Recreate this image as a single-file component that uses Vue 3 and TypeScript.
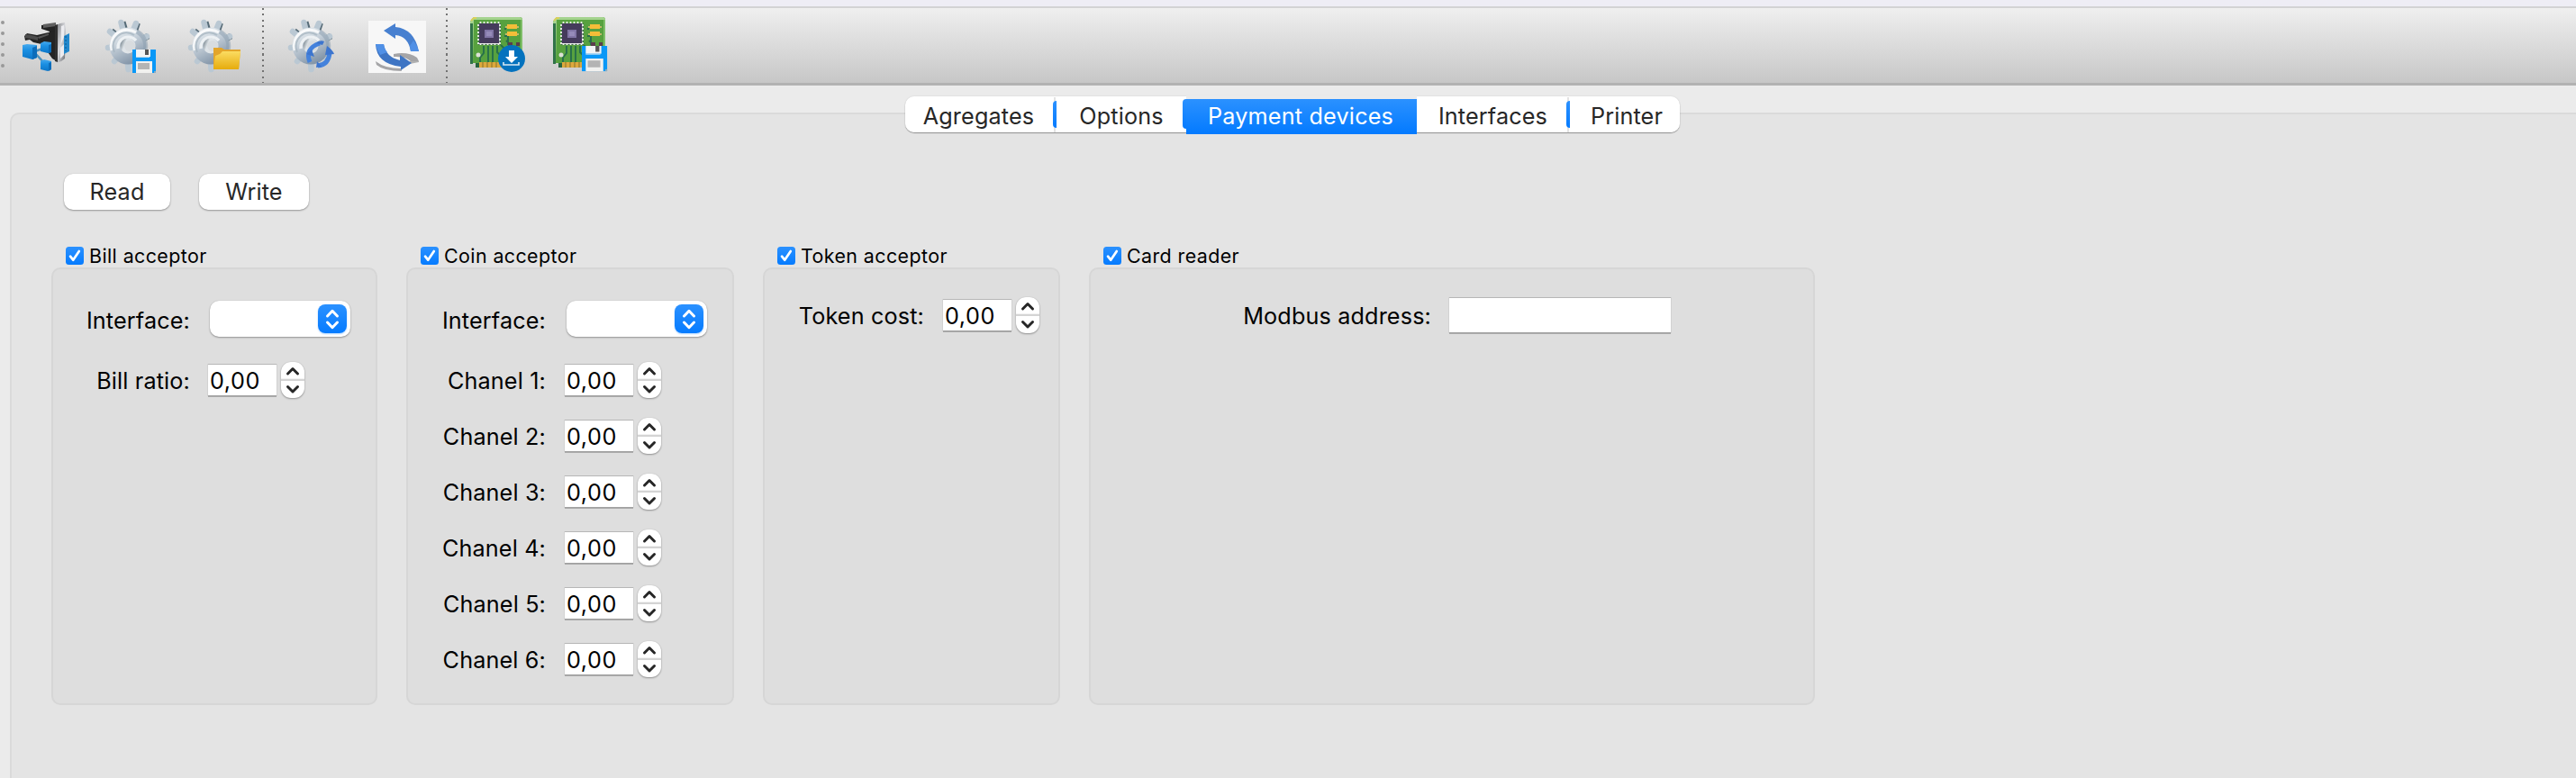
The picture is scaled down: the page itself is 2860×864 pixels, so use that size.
<script setup lang="ts">
import { ref } from 'vue'

interface Field { label: string; kind: 'combo' | 'spin' | 'text' }
interface Group { id: string; title: string; fields: Field[] }
type Tool = 'acceptor' | 'gear-save' | 'gear-open' | 'gear-sync' | 'refresh' | 'board-load' | 'board-save'

const sections: Tool[][] = [
  ['acceptor', 'gear-save', 'gear-open'],
  ['gear-sync', 'refresh'],
  ['board-load', 'board-save'],
]
const tabs = ['Agregates', 'Options', 'Payment devices', 'Interfaces', 'Printer']
const active = ref(2)

const groups: Group[] = [
  { id: 'bill', title: 'Bill acceptor', fields: [{ label: 'Interface:', kind: 'combo' }, { label: 'Bill ratio:', kind: 'spin' }] },
  {
    id: 'coin',
    title: 'Coin acceptor',
    fields: [
      { label: 'Interface:', kind: 'combo' },
      ...[1, 2, 3, 4, 5, 6].map((n): Field => ({ label: `Chanel ${n}:`, kind: 'spin' })),
    ],
  },
  { id: 'token', title: 'Token acceptor', fields: [{ label: 'Token cost:', kind: 'spin' }] },
  { id: 'card', title: 'Card reader', fields: [{ label: 'Modbus address:', kind: 'text' }] },
]
const teeth = [[20.5, 4], [37, 5], [49, 19.5], [8, 14], [6, 32], [13, 47], [28.5, 56], [45, 43]]
const pins = [14, 18, 22, 26, 30, 34]
</script>

<template>
  <div class="window">
    <svg class="defs" width="0" height="0">
      <defs>
        <linearGradient id="blue" x1="0" y1="0" x2="0" y2="1">
          <stop stop-color="#2b91ff" /><stop offset="1" stop-color="#057bff" />
        </linearGradient>
        <linearGradient id="steel" x1="0" y1="0" x2="0.5" y2="1">
          <stop offset="0" stop-color="#f1f5f7" /><stop offset="0.45" stop-color="#c9d3dc" /><stop offset="1" stop-color="#8496a9" />
        </linearGradient>
        <linearGradient id="hub" x1="0" y1="0" x2="1" y2="0.4">
          <stop offset="0" stop-color="#56656f" /><stop offset="0.4" stop-color="#dfe5e9" /><stop offset="1" stop-color="#dfe3e6" />
        </linearGradient>
        <linearGradient id="folder" x1="0" y1="0" x2="0" y2="1">
          <stop offset="0" stop-color="#fbdc62" /><stop offset="1" stop-color="#e6ab0c" />
        </linearGradient>
        <linearGradient id="cube" x1="0" y1="0" x2="0" y2="1">
          <stop offset="0" stop-color="#45a9ee" /><stop offset="0.4" stop-color="#1b8fe2" /><stop offset="1" stop-color="#0c76c8" />
        </linearGradient>
        <linearGradient id="plate" x1="0" y1="0" x2="1" y2="1">
          <stop offset="0" stop-color="#74767a" /><stop offset="0.5" stop-color="#d9dade" /><stop offset="1" stop-color="#5f6165" />
        </linearGradient>
        <g id="gear">
          <line v-for="(t, i) in teeth.slice(0, 4)" :key="'d' + i" x1="30" y1="31" :x2="t[0] + 1.5" :y2="t[1] + 0.5" stroke="#556a76" stroke-width="7" />
          <line v-for="(t, i) in teeth" :key="'l' + i" x1="27" y1="31" :x2="t[0]" :y2="t[1] + 1" stroke="#bac8d3" stroke-width="6.5" stroke-linecap="round" />
          <circle cx="28" cy="31" r="20.5" fill="url(#steel)" />
          <path d="M10 36a18 18 0 0 1 27-20" fill="none" stroke="#fff" stroke-width="3" opacity=".8" />
          <path d="M38 15a18 18 0 0 1 9 21" fill="none" stroke="#8ea0b1" stroke-width="5" opacity=".55" />
          <path d="M13 38a15 15 0 0 1 22-19" fill="none" stroke="#a3b2be" stroke-width="2" opacity=".7" />
          <path d="M17 34a11.500 11.500 0 0 1 20-9" fill="none" stroke="#edf1f4" stroke-width="3.500" />
          <circle cx="28" cy="31" r="8.500" fill="url(#hub)" />
          <circle cx="30" cy="31" r="6" fill="#d8dcdf" />
        </g>
        <g id="floppy">
          <path d="M0 0h26v26H0z" fill="#0998f7" />
          <path d="M4 0h16v8H4z" fill="#f2f4f5" /><path d="M14 0h4v6h-4z" fill="#555" /><path d="M4 8h15v1H4z" fill="#b9d9ee" />
          <path d="M4 13h18v13H4z" fill="#f1f1ef" /><path d="M6 15h13v7H6z" fill="#b4b4b4" /><path d="M24 24h2v2h-2z" fill="#8babbf" />
        </g>
        <g id="board">
          <path d="M5-1h51q3 0 3 3v48H10v3H7v-3H1V4z" fill="#57a13f" />
          <path d="M1 4L5-1h51q3 0 3 3H5l-1 48H1z" fill="#a4d38e" />
          <path d="M1 6h3v45H1z" fill="#317349" /><path d="M7 50h4v5H7z" fill="#29643f" /><path d="M57 2h2v48h-2z" fill="#7fbd68" />
          <path d="M16 31v8l-4 5v5M21 31v19M26 31v19M31 31v7l4 4v7M35 30l7 7v12M39 20h4v10M39 12h2M41 25l14 14" fill="none" stroke="#28704a" stroke-width="2" />
          <path d="M2 3l3-3h3" fill="none" stroke="#d7d05a" stroke-width="2" />
          <path d="M11 49h26v6H11z" fill="#dda83d" /><path d="M15 49v6M20 49v6M25 49v6M30 49v6" stroke="#83722e" stroke-width="1" />
          <path d="M10 6h25v24H10z" fill="#3e6a4b" />
          <g stroke="#f1f3ef" stroke-width="1.8">
            <g v-for="p in pins" :key="p">
              <path :d="`M${p - 1.5} 4v26`" /><path :d="`M9 ${p - 6}h26`" />
            </g>
          </g>
          <path d="M11 6h22v22H11z" fill="#453b5c" /><path d="M17 13h10v9H17z" fill="#8175a5" /><path d="M19 15h6v5h-6z" fill="#968bb9" />
          <path d="M42 7h11v5H42zM42 15h11v5H42z" fill="#f4bd38" /><path d="M40 9h2v2h-2zM53 9h2v2h-2zM40 17h2v2h-2zM53 17h2v2h-2z" fill="#c5b66a" />
          <path d="M43 27h5v5h-5zM52 27h4v4h-4z" fill="#5a3e4c" /><circle cx="10" cy="41" r="2.5" fill="#dde1d7" />
        </g>
      </defs>
    </svg>

    <header class="toolbar">
      <div class="handle"><i v-for="n in 5" :key="n" /></div>
      <div v-for="(section, s) in sections" :key="s" class="section">
        <svg v-for="tool in section" :key="tool" class="tool" viewBox="0 -2 64 64">
          <template v-if="tool === 'acceptor'">
            <path d="M24 8l16-2v11l-7 2v-4l-9-3z" fill="#242424" /><path d="M26 7l14-2v4l-14 2z" fill="#606060" />
            <path d="M5 20l3-3 11 2 17-4 5-2v35l-5-3-7-10-5-6-9-2-4-3-5 1z" fill="#242424" />
            <path d="M6 18l7 1 7 2v4l-3-1-11-2z" fill="#4c4c4c" /><path d="M20 21l12-4v2l-11 4z" fill="#555" />
            <path d="M40 8l5-2 5-1 1 8-1 32-4 3-6 2z" fill="url(#plate)" /><path d="M39 8l3-1v42l-3-1z" fill="#303030" />
            <path d="M46 9l3-1v13l-3 7zM45 33l4-4v12l-4 4z" fill="#ececf0" />
            <path d="M49 20l6-3v20l-6 3z" fill="#2389cd" /><path d="M51 20v17" stroke="#0a568f" stroke-dasharray="2 2" />
            <path d="M17 37l8-3M17 39l11 12" stroke="#4a8fbb" stroke-width="2.5" />
            <path d="M3 30l5-1 11 1v14l-5 2-11-3z" fill="url(#cube)" /><path d="M14 33l5-2v13l-5 2z" fill="#0b6cba" />
            <path d="M23 28l4-2 8 1v11l-4 1-8-2z" fill="url(#cube)" /><path d="M32 30l3-1v9l-3 1z" fill="#0b6cba" />
            <path d="M23 48l4-2 8 2v9l-4 2-8-2z" fill="url(#cube)" /><path d="M32 50l3-1v8l-3 2z" fill="#0b6cba" />
          </template>
          <use v-if="tool.startsWith('gear')" href="#gear" />
          <use v-if="tool.startsWith('board')" href="#board" />
          <use v-if="tool === 'gear-save'" href="#floppy" transform="translate(33 35)" />
          <template v-if="tool === 'gear-open'">
            <path d="M31 33h9l3 2h18l-2 22H31z" fill="#e3a52b" /><path d="M33 42l5-2 3-3h20l-2 20H31z" fill="url(#folder)" />
          </template>
          <template v-if="tool === 'gear-sync'">
            <g fill="none" stroke="#4482dc" stroke-width="5">
              <path d="M27 49q-6-15 11-21" /><path d="M36 53q12-1 13-15" />
            </g>
            <path d="M34 28q4-4 9-2l-2 4zM46 31q6 4 8 9l-10 1zM23 40l6-5 3 8zM35 48l-1 7 6-1z" fill="#3d75ce" />
          </template>
          <template v-if="tool === 'refresh'">
            <path d="M0 3h64v58H0z" fill="#f7f7f7" />
            <path d="M8 48q10 8 28 8l1 3q-20 0-28-7zM28 40q16-3 26 4l2 4-8 1q-6-7-20-6z" fill="#a5a5a7" />
            <path d="M46 48h10v1l-10 2z" fill="#b1b1b1" />
            <path d="M17 14L30 6v4q21 2 26 27h-9q-3-17-17-18v4z" fill="#4780d0" />
            <path d="M8 29h9q2 14 18 18v-6l13 9-12 8v-4Q9 51 8 29z" fill="#3e75c4" />
            <path d="M50 25q4 5 6 12h-9l-1-6zM8 29h9q1 6 4 9l-8 3q-4-6-5-12z" fill="#5090e6" />
          </template>
          <template v-if="tool === 'board-load'">
            <circle cx="47" cy="45" r="15" fill="#0472be" /><path d="M44 36h6v7h4l-7 7-7-7h4z" fill="#fff" />
            <path d="M38 49v3h17v-3" fill="none" stroke="#d8e9f4" stroke-width="1.6" />
          </template>
          <use v-if="tool === 'board-save'" href="#floppy" transform="translate(33 31) scale(1.08)" />
        </svg>
      </div>
    </header>

    <main class="body">
      <nav class="tabs">
        <button v-for="(tab, i) in tabs" :key="tab" :class="['tab', 'tab-' + i, { active: i === active }]" @click="active = i"><span>{{ tab }}</span></button>
      </nav>
      <section class="pane">
        <div class="actions">
          <button class="push read">Read</button>
          <button class="push write">Write</button>
        </div>
        <div class="groups">
          <section v-for="group in groups" :key="group.id" :class="['group', group.id]">
            <h2 class="title">
              <svg class="check" viewBox="0 0 20 20"><rect width="20" height="20" rx="3.5" fill="url(#blue)" /><path d="M5 10.700l3.200 4 6.600-9.700" fill="none" stroke="#fff" stroke-width="2.7" stroke-linecap="round" stroke-linejoin="round" /></svg>
              <span>{{ group.title }}</span>
            </h2>
            <div class="box">
              <div v-for="field in group.fields" :key="field.label" :class="['row', field.kind]">
                <span class="label">{{ field.label }}</span>
                <div v-if="field.kind === 'combo'" class="select">
                  <svg class="arrows" viewBox="0 0 32 32"><path d="M10.500 13L16 7.300l5.500 5.700M10.500 20l5.500 5.700L21.500 20" fill="none" stroke="#fff" stroke-width="3" stroke-linecap="round" stroke-linejoin="round" /></svg>
                </div>
                <template v-else-if="field.kind === 'spin'">
                  <div class="number">0,00</div>
                  <div class="stepper">
                    <svg viewBox="0 0 26 40"><path d="M0 19h26v2H0z" fill="#d4d4d4" /><path d="M0 18h26v1H0z" fill="#f2f2f2" /><path d="M7.500 13L13 7.500l5.500 5.500M7.500 27.500L13 33l5.500-5.500" fill="none" stroke="#262626" stroke-width="3" stroke-linecap="round" stroke-linejoin="round" /></svg>
                  </div>
                </template>
                <div v-else class="line-edit" />
              </div>
            </div>
          </section>
        </div>
      </section>
    </main>
  </div>
</template>

<style>
body { margin: 0; overflow: hidden; }
</style>

<style scoped>
* { box-sizing: border-box; }
.window { width: 2860px; height: 864px; overflow: hidden; background: #ebebeb; border-top: 7px solid #eeedf5; font-family: Inter, "Liberation Sans", sans-serif; font-size: 25.2px; letter-spacing: .15px; color: #000; }
.defs { position: absolute; }
.toolbar { display: flex; height: 88px; padding-left: 1px; border-top: 2px solid #d3d3d4; border-bottom: 3px solid #b2b2b2; background: linear-gradient(#efefef, #c7c7c7); }
.handle { width: 4px; padding-top: 14px; display: flex; flex-direction: column; gap: 8px; }
.handle i { width: 4px; height: 4px; border-radius: 50%; background: #999; }
.section { display: flex; gap: 28px; padding: 9px 20px 0 24px; }
.section:nth-child(2) { padding: 9px 21px 0 17px; }
.section:nth-child(3) { padding: 9px 22px 0 24px; }
.section + .section { border-left: 2px solid; border-image: repeating-linear-gradient(transparent 0 2px, #727272 2px 4px, transparent 4px 6px) 2; }
.tool { width: 64px; height: 64px; flex: none; overflow: visible; }
button { border: 0; padding: 0; font: inherit; letter-spacing: inherit; color: #272727; }
.body { padding: 12px 0 0 11px; }
.tabs { position: relative; z-index: 1; display: flex; width: 860px; height: 40px; margin-left: 994px; border-radius: 10px; box-shadow: 0 1px 1px #0005, 0 0 2px #0002; }
.tab { position: relative; height: 40px; padding-top: 3px; background: #fff; text-align: center; }
.tab-0 { width: 168px; border-radius: 10px 0 0 10px; padding-right: 5px; }
.tab-1 { width: 144px; }
.tab-2 { width: 256px; letter-spacing: .2px; }
.tab-3 { width: 170px; padding-right: 1px; }
.tab-4 { width: 122px; border-radius: 0 10px 10px 0; padding-left: 4px; }
.tab-0::after, .tab-3::after { content: ""; position: absolute; right: 0; top: 5px; width: 4px; height: 30px; border-radius: 4px 0 0 4px; background: linear-gradient(#2b91ff, #057bff); }
.tab-0::before, .tab-3::before { content: ""; position: absolute; right: 1px; top: 1px; width: 2px; height: 39px; background: #e3e3e3; }
.tab.active { height: 39px; margin-top: 3px; padding: 0; color: #fff; background: linear-gradient(#2b91ff, #037aff); box-shadow: 0 -4px 0 #ebebeb; }
.tab.active::before { content: ""; position: absolute; left: -4px; top: 0; width: 4px; height: 33px; border-radius: 4px 0 0 4px; background: linear-gradient(#2b91ff, #057bff); }
.tab.active span { position: relative; top: -1px; left: -1px; }
.pane { width: 2860px; height: 760px; margin-top: -22px; padding: 66px 0 0 44px; border: 2px solid #dadada; border-radius: 10px; background: #e4e4e4; }
.actions { display: flex; gap: 32px; padding-left: 14px; }
.push { height: 40px; border-radius: 10px; background: #fff; box-shadow: 0 1px 2px #0005, 0 0 1px #0003; }
.read { width: 118px; }
.write { width: 122px; }
.groups { display: flex; gap: 32px; margin-top: 39px; }
.title { display: flex; align-items: center; gap: 6px; height: 25px; margin: 0; padding: 0 0 1px 16px; font-size: 21.4px; font-weight: 400; letter-spacing: .42px; white-space: nowrap; }
.check { width: 20px; height: 20px; }
.box { height: 486px; border: 2px solid #d6d6d6; border-radius: 10px; background: #dedede; }
.bill { width: 362px; }
.coin { width: 364px; }
.token { width: 330px; }
.card { width: 806px; }
.row { display: flex; align-items: center; height: 62px; }
.label { padding-top: 2px; text-align: right; white-space: nowrap; }
.bill .box, .coin .box { padding-top: 24px; }
.row.combo { margin-bottom: 6px; }
.row.combo .label { padding-top: 3px; }
.select { width: 156px; height: 40px; padding: 4px; border-radius: 10px; background: #fff; box-shadow: 0 1px 2px #0005, 0 0 1px #0003; display: flex; justify-content: flex-end; }
.arrows { width: 32px; height: 32px; border-radius: 8px; background: linear-gradient(#2b91ff, #057bff); box-shadow: 0 1px 2px #007aff55; }
.number { width: 76px; height: 34px; margin-right: 5px; padding-left: 2px; line-height: 37px; background: #fff; box-shadow: 0 0 0 1px #0000000d, 0 -1px 0 #0002, 0 2px 0 #aaa; letter-spacing: .6px; }
.stepper { width: 26px; height: 40px; border-radius: 11px; background: #fff; overflow: hidden; box-shadow: 0 1px 2px #0005, 0 0 1px #0003; }
.stepper svg { display: block; width: 26px; height: 40px; }
.bill .label { width: 152px; margin-right: 20px; }
.bill .combo .label { width: 152px; margin-right: 22px; }
.coin .label { width: 153px; margin-right: 21px; }
.coin .combo .label { width: 153px; margin-right: 23px; }
.token .box { padding-top: 20px; }
.token .label { width: 177px; margin-right: 21px; }
.card .box { padding-top: 20px; }
.card .label { width: 378px; margin-right: 20px; }
.line-edit { width: 246px; height: 38px; background: #fff; box-shadow: 0 0 0 1px #0000000d, 0 -1px 0 #0002, 0 2px 0 #aaa; }
</style>
